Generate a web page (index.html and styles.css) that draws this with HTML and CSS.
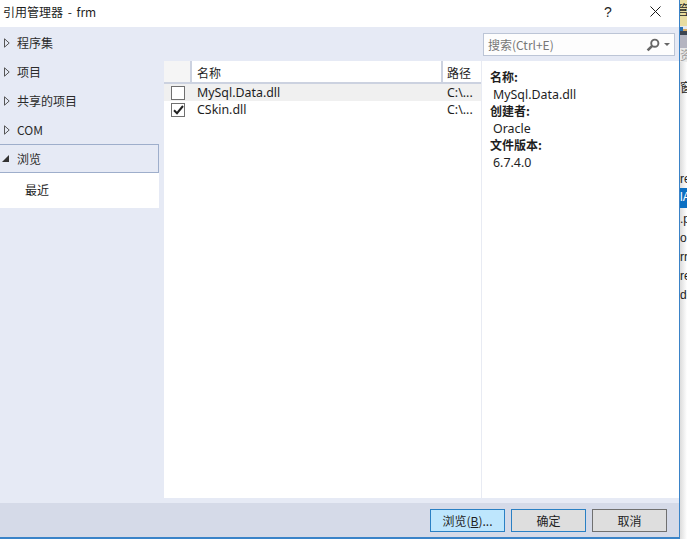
FILE: index.html
```html
<!DOCTYPE html>
<html lang="zh">
<head>
<meta charset="utf-8">
<title>引用管理器 - frm</title>
<link rel="stylesheet" href="styles.css">
</head>
<body>
<div class="screen">
  <div class="dialog">
    <header class="titlebar">
      <span class="title">引用管理器 - frm</span>
      <span class="help">?</span>
      <svg class="close" width="11" height="11" viewBox="0 0 11 11"><path d="M.5.5l10 10M10.5.5l-10 10" stroke="#1a1a1a" fill="none"/></svg>
    </header>
    <div class="main">
      <nav class="nav">
        <div class="nav-item"><svg class="tri" width="6" height="10" viewBox="0 0 6 10"><path d="M.5.8L5.2 5 .5 9.2z" fill="none" stroke="#555"/></svg>程序集</div>
        <div class="nav-item"><svg class="tri" width="6" height="10" viewBox="0 0 6 10"><path d="M.5.8L5.2 5 .5 9.2z" fill="none" stroke="#555"/></svg>项目</div>
        <div class="nav-item"><svg class="tri" width="6" height="10" viewBox="0 0 6 10"><path d="M.5.8L5.2 5 .5 9.2z" fill="none" stroke="#555"/></svg>共享的项目</div>
        <div class="nav-item"><svg class="tri" width="6" height="10" viewBox="0 0 6 10"><path d="M.5.8L5.2 5 .5 9.2z" fill="none" stroke="#555"/></svg>COM</div>
        <div class="nav-item selected"><svg class="tri" width="7" height="7" viewBox="0 0 7 7"><path d="M0 7L7 0v7z" fill="#333"/></svg>浏览</div>
        <div class="nav-sub">最近</div>
      </nav>
      <div class="content">
        <div class="searchbar">
          <div class="search">
            <span class="search-text">搜索(Ctrl+E)</span>
            <svg class="glass" width="14" height="14" viewBox="0 0 14 14"><circle cx="8.8" cy="5.2" r="3.6" fill="none" stroke="#666" stroke-width="1.9"/><path d="M6.2 7.8L1.6 12.4" stroke="#666" stroke-width="2.6"/></svg>
            <span class="caret"></span>
          </div>
        </div>
        <div class="panes">
          <div class="table">
            <div class="thead">
              <div class="th th-check"></div>
              <div class="th th-name">名称</div>
              <div class="th th-path">路径</div>
            </div>
            <div class="row row-hover">
              <span class="check"></span>
              <span class="name">MySql.Data.dll</span>
              <span class="path">C:\...</span>
            </div>
            <div class="row">
              <span class="check"><svg width="11" height="10" viewBox="0 0 11 10"><path d="M1 5.2l3 3L10 1" fill="none" stroke="#222" stroke-width="2"/></svg></span>
              <span class="name">CSkin.dll</span>
              <span class="path">C:\...</span>
            </div>
          </div>
          <aside class="details">
            <div class="label">名称:</div>
            <div class="value">MySql.Data.dll</div>
            <div class="label">创建者:</div>
            <div class="value">Oracle</div>
            <div class="label">文件版本:</div>
            <div class="value">6.7.4.0</div>
          </aside>
        </div>
      </div>
    </div>
    <footer class="footer">
      <button class="btn btn-hover">浏览(<u>B</u>)...</button>
      <button class="btn btn-default">确定</button>
      <button class="btn">取消</button>
    </footer>
  </div>
  <div class="behind">
    <div class="b-top">管</div>
    <div class="b-icons"><span class="b-arrow"></span><span class="b-orange"></span></div>
    <div class="b-toolbar"></div>
    <div class="b-tab">资</div>
    <div class="b-code">
      <div class="b-line b-first">窗</div>
      <div class="b-line b-list">re</div>
      <div class="b-line b-sel">lA</div>
      <div class="b-line">.p</div>
      <div class="b-line">o</div>
      <div class="b-line">rr</div>
      <div class="b-line">re</div>
      <div class="b-line">de</div>
    </div>
  </div>
</div>
</body>
</html>
```

FILE: styles.css
```css
* { box-sizing: border-box; }
html, body { margin: 0; height: 100%; }
body {
  font-family: "Noto Sans CJK SC", "Liberation Sans", sans-serif;
  font-size: 12px;
  color: #1e1e1e;
  background: #fff;
  overflow: hidden;
}
.screen { display: flex; width: 687px; height: 539px; }
.dialog {
  width: 680px;
  height: 539px;
  display: flex;
  flex-direction: column;
  background: #e6eaf5;
  border-right: 1px solid #3a83c8;
  border-bottom: 2px solid #3a83c8;
}
.titlebar {
  height: 27px;
  flex: none;
  background: #fff;
  display: flex;
  align-items: center;
  padding-left: 3px;
  padding-bottom: 4px;
}
.title { flex: 1; font-size: 12px; word-spacing: 2px; }
.help { font-family: "Liberation Sans", sans-serif; font-size: 14px; width: 12px; margin-right: 34px; }
.close { margin-right: 18px; }
.main { flex: 1; display: flex; min-height: 0; }
.nav { width: 159px; margin-right: 5px; padding-top: 1px; flex: none; }
.nav-item {
  height: 29px;
  display: flex;
  align-items: center;
  font-size: 12px;
  padding-left: 4px;
  color: #2a2a2a;
}
.tri { margin-right: 7px; flex: none; }
.selected {
  height: 29px;
  border: 1px solid #9eaecb;
  border-left: none;
  padding-left: 2px;
}
.selected .tri { margin-right: 8px; }
.nav-sub { height: 35px; background: #fff; display: flex; align-items: center; padding: 0 0 2px 25px; }
.content { flex: 1; display: flex; flex-direction: column; min-width: 0; }
.searchbar { height: 34px; flex: none; padding: 6px 4px 5px 319px; }
.search {
  height: 23px;
  width: 192px;
  background: #fdfdfd;
  border: 1px solid #bcc5d6;
  display: flex;
  align-items: center;
  padding-left: 4px;
}
.search-text { flex: 1; color: #777; font-size: 12px; }
.glass { margin-right: 4px; }
.caret {
  width: 0; height: 0;
  margin-right: 4px;
  border-left: 3px solid transparent;
  border-right: 3px solid transparent;
  border-top: 3px solid #666;
}
.panes { height: 437px; flex: none; display: flex; background: #fff; }
.table { width: 317px; flex: none; }
.thead { display: flex; height: 23px; background: #fff; border-bottom: 2px solid #ccd2e0; }
.th {
  font-size: 12px;
  display: flex;
  align-items: center;
  padding-top: 2px;
  border-right: 2px solid #ccd2e0;
}
.th-check { width: 28px; background: #f5f5f5; }
.th-name { width: 251px; padding-left: 5px; }
.th-path { width: 38px; border-right: none; padding-left: 4px; }
.row { height: 17px; display: flex; align-items: center; font-family: "Noto Sans", "Noto Sans CJK SC", sans-serif; font-size: 12.4px; }
.row-hover { background: #f0f0f0; }
.check {
  width: 14px;
  height: 14px;
  margin: 0 12px 0 7px;
  flex: none;
  background: #fff;
  border: 1px solid #707070;
  display: flex;
  align-items: center;
  justify-content: center;
}
.name { width: 250px; }
.path { font-size: 12.4px; }
.details {
  flex: 1;
  border-left: 1px solid #e8ebf3;
  padding: 7px 0 0 8px;
  font-family: "Noto Sans", "Noto Sans CJK SC", sans-serif;
  font-size: 12.4px;
  line-height: 17px;
}
.label { font-weight: 700; font-family: "Noto Sans CJK SC", sans-serif; font-size: 12px; }
.value { padding-left: 3px; padding-top: 1px; margin-bottom: -1px; }
.footer {
  height: 34px;
  flex: none;
  margin-top: 5px;
  background: #d5dae8;
  display: flex;
  justify-content: flex-end;
  align-items: flex-start;
  gap: 6px;
  padding: 6px 12px 0 0;
}
.btn {
  width: 75px;
  height: 23px;
  padding: 0;
  font-family: "Noto Sans CJK SC", "Liberation Sans", sans-serif;
  font-size: 12px;
  color: #1e1e1e;
  background: #dedede;
  border: 1px solid #707070;
}
.btn-hover { background: #bee6fd; border-color: #2a80c4; }
.btn-default { border-color: #2a80c4; }
.behind {
  width: 7px;
  height: 539px;
  flex: none;
  overflow: hidden;
  background: linear-gradient(90deg, #dcdcdc, #fff);
  display: flex;
  flex-direction: column;
}
.b-top { height: 26px; background: #e8dca0; font-size: 13px; line-height: 18px; white-space: nowrap; margin-left: -4px; }
.b-icons { height: 5px; background: #e6e8ee; display: flex; align-items: flex-end; }
.b-arrow { width: 3px; height: 4px; background: #2a6fb0; }
.b-orange { width: 4px; height: 2px; background: #d8a860; }
.b-toolbar { height: 17px; background: #b4b4c0; border-top: 4px solid #3c4450; }
.b-tab { height: 14px; background: #e9e9e9; color: #999; font-size: 12px; line-height: 14px; }
.b-code { flex: 1; padding-top: 18px; }
.b-line { height: 19px; font-family: "Liberation Sans", sans-serif; font-size: 12px; line-height: 19px; overflow: hidden; white-space: nowrap; color: #222; }
.b-first { height: 90px; font-family: "Noto Sans CJK SC", sans-serif; line-height: 14px; }
.b-list { height: 18px; }
.b-sel { background: #0a6fc2; color: #fff; height: 20px; margin-bottom: 2px; }
```
